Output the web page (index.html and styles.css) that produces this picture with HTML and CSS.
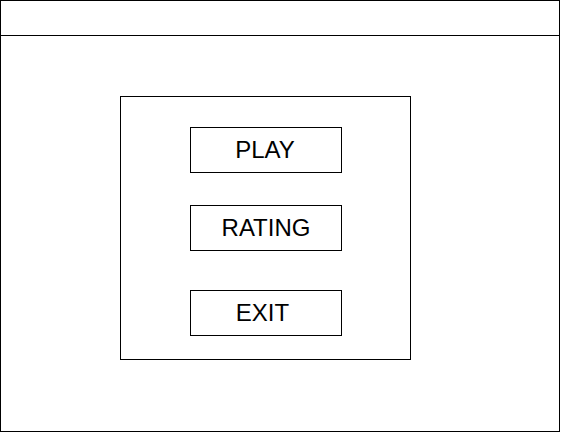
FILE: index.html
```html
<!DOCTYPE html>
<html>
<head>
<meta charset="utf-8">
<link rel="stylesheet" href="styles.css">
</head>
<body>
<div class="window">
  <div class="titlebar"></div>
  <div class="content">
    <div class="menu">
      <div class="btn btn-play">PLAY</div>
      <div class="btn btn-rating">RATING</div>
      <div class="btn btn-exit">EXIT</div>
    </div>
  </div>
</div>
</body>
</html>
```
FILE: styles.css
```css
html, body {
  margin: 0;
  padding: 0;
  background: #fff;
}
.window {
  width: 560px;
  height: 432px;
  box-sizing: border-box;
  border: 1px solid #000;
  display: flex;
  flex-direction: column;
}
.titlebar {
  height: 34px;
  border-bottom: 1px solid #000;
}
.content {
  flex: 1;
  padding: 60px 0 0 119px;
}
.menu {
  width: 291px;
  height: 264px;
  box-sizing: border-box;
  border: 1px solid #000;
  padding: 30px 0 0 69px;
  display: flex;
  flex-direction: column;
}
.btn {
  width: 152px;
  height: 46px;
  box-sizing: border-box;
  border: 1px solid #000;
  display: flex;
  align-items: center;
  justify-content: center;
  font-family: "Liberation Sans", Arial, sans-serif;
  font-size: 24px;
  color: #000;
}
.btn-play {
  padding-right: 2px;
}
.btn-rating {
  margin-top: 32px;
}
.btn-exit {
  margin-top: 39px;
  padding-right: 7px;
}
```
